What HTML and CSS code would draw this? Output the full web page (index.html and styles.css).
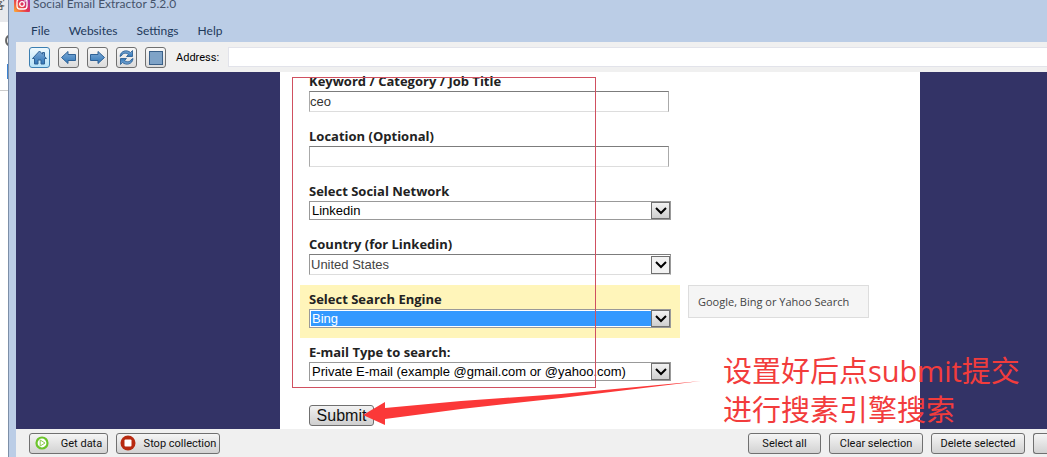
FILE: index.html
```
<!DOCTYPE html>
<html lang="en">
<head>
  <meta charset="UTF-8" />
  <meta name="viewport" content="width=device-width, initial-scale=1.0"/>
  <title>Social Email Extractor 5.2.0</title>
  <link rel="stylesheet" href="styles.css">
</head>
<body>

  <!-- Window behind the app -->
  <div class="behind">
    <div class="behind-tab">客</div>
    <div class="behind-bar">
      <svg width="8" height="68" viewBox="0 0 8 68">
        <path d="M9 13.500a5 5.500 0 0 0 0 10" fill="none" stroke="#666" stroke-width="2"/>
        <rect x="7" y="42" width="1" height="15" fill="#3b82d0"/>
      </svg>
    </div>
  </div>

  <div class="window">
    <header class="title-bar">
      <svg class="logo" width="16" height="16" viewBox="0 0 16 16">
        <defs>
          <linearGradient id="insta" x1="0" y1="1" x2="1" y2="0">
            <stop offset="0" stop-color="#fdb035"/>
            <stop offset="0.45" stop-color="#e5334f"/>
            <stop offset="1" stop-color="#9a35c4"/>
          </linearGradient>
        </defs>
        <rect width="16" height="16" rx="1" fill="url(#insta)"/>
        <rect x="3" y="3" width="10" height="10" rx="3" fill="none" stroke="#fff" stroke-width="1.3"/>
        <circle cx="8" cy="8" r="2.3" fill="none" stroke="#fff" stroke-width="1.3"/>
        <circle cx="11" cy="5" r="0.8" fill="#fff"/>
      </svg>
      <span>Social Email Extractor 5.2.0</span>
    </header>

    <nav class="menu">
      <a href="#">File</a>
      <a href="#">Websites</a>
      <a href="#">Settings</a>
      <a href="#">Help</a>
    </nav>

    <div class="toolbar">
      <button class="tool active" aria-label="Home">
        <svg width="17" height="17" viewBox="0 0 17 17"><path d="M8.500 2L1.500 9.500H3.500V15H7V11H10V15H13.500V9.500H15.500L13.500 7.300V3.500H11.500V5.200Z" fill="url(#blue)" stroke="#2f6296"/></svg>
      </button>
      <button class="tool" aria-label="Back">
        <svg width="17" height="17" viewBox="0 0 17 17"><path d="M1.500 8.500L8 2.500V5.500H15.500V11.500H8V14.500Z" fill="url(#blue)" stroke="#2f6296"/></svg>
      </button>
      <button class="tool" aria-label="Forward">
        <svg width="17" height="17" viewBox="0 0 17 17"><path d="M15.500 8.500L9 2.500V5.500H1.500V11.500H9V14.500Z" fill="url(#blue)" stroke="#2f6296"/></svg>
      </button>
      <button class="tool" aria-label="Refresh">
        <svg width="17" height="17" viewBox="0 0 17 17"><path id="turn" d="M2 7.500C2.500 1.500 9 .5 12.500 3.500L14.500 1.500V7.500H8.500L10.500 5.500C8 3.500 5 4 4 6.200Z" fill="url(#blue)" stroke="#2f6296" stroke-width=".9"/><use href="#turn" transform="rotate(180 8.500 8.500)"/></svg>
      </button>
      <button class="tool" aria-label="Stop">
        <svg width="17" height="17" viewBox="0 0 17 17">
          <defs>
            <linearGradient id="blue" x1="0" y1="0" x2="0" y2="1">
              <stop offset="0" stop-color="#7fabd6"/>
              <stop offset="1" stop-color="#2f76b8"/>
            </linearGradient>
          </defs>
          <rect x="2.500" y="2.500" width="13" height="13" fill="#7fa3c7" stroke="#3a6089"/>
        </svg>
      </button>
      <label for="address">Address:</label>
      <input type="text" id="address" class="address">
    </div>

    <main class="viewport">
      <form class="page">
        <div class="field">
          <label for="keyword">Keyword / Category / Job Title</label>
          <input type="text" id="keyword" value="ceo">
        </div>
        <div class="field">
          <label for="location">Location (Optional)</label>
          <input type="text" id="location">
        </div>
        <div class="field">
          <label for="network">Select Social Network</label>
          <div class="select">
            <select id="network"><option>Linkedin</option></select>
            <span class="drop"><svg width="12" height="8" viewBox="0 0 12 8"><path d="M1 1L6 6L11 1" fill="none" stroke="#000" stroke-width="2"/></svg></span>
          </div>
        </div>
        <div class="field">
          <label for="country">Country (for Linkedin)</label>
          <div class="select country">
            <select id="country"><option>United States</option></select>
            <span class="drop"><svg width="12" height="8" viewBox="0 0 12 8"><path d="M1 1L6 6L11 1" fill="none" stroke="#000" stroke-width="2"/></svg></span>
          </div>
        </div>
        <div class="field current">
          <label for="engine">Select Search Engine</label>
          <div class="select">
            <select id="engine"><option>Bing</option></select>
            <span class="drop"><svg width="12" height="8" viewBox="0 0 12 8"><path d="M1 1L6 6L11 1" fill="none" stroke="#000" stroke-width="2"/></svg></span>
          </div>
          <div class="hint">Google, Bing or Yahoo Search</div>
        </div>
        <div class="field">
          <label for="type">E-mail Type to search:</label>
          <div class="select">
            <select id="type"><option>Private E-mail (example @gmail.com or @yahoo.com)</option></select>
            <span class="drop"><svg width="12" height="8" viewBox="0 0 12 8"><path d="M1 1L6 6L11 1" fill="none" stroke="#000" stroke-width="2"/></svg></span>
          </div>
        </div>
        <button type="submit" class="submit">Submit</button>
      </form>

      <!-- Notes drawn over the page -->
      <div class="note-frame"></div>
      <svg class="note-arrow" width="340" height="46" viewBox="0 0 340 46">
        <path d="M2 35L24 22L24 28L100 21L200 14L340 1L200 18L100 29L24 39L24 45Z" fill="#fb3838"/>
      </svg>
      <p class="note-text" lang="zh">设置好后点submit提交<br>进行搜素引擎搜索</p>
    </main>

    <footer class="actions">
      <button class="get"><svg width="14" height="14" viewBox="0 0 14 14"><circle cx="7" cy="7" r="5.500" fill="#fff" stroke="#6cc42c" stroke-width="2.200"/><path d="M5.200 4L10 7L5.200 10Z" fill="#fff" stroke="#8ccc50"/></svg>Get data</button>
      <button class="stop"><svg width="16" height="16" viewBox="0 0 16 16"><circle cx="8" cy="8" r="7.500" fill="#b82a10"/><rect x="4.500" y="4.500" width="7" height="7" rx="1" fill="#fff"/></svg>Stop collection</button>
      <span class="spacer"></span>
      <button class="select-all">Select all</button>
      <button class="wide">Clear selection</button>
      <button class="wide">Delete selected</button>
      <button class="cut" aria-label="More"></button>
    </footer>
  </div>

</body>
</html>
```
FILE: styles.css
```
* {
  box-sizing: border-box;
}
body {
  margin: 0;
  height: 100vh;
  display: flex;
  overflow: hidden;
  background: #fff;
  font-family: "Open Sans", sans-serif;
  font-size: 12px;
}
button, input, select {
  font-family: inherit;
  margin: 0;
}
.behind {
  flex: 0 0 8px;
  overflow: hidden;
}
.behind-tab {
  height: 22px;
  background: #e8e9ec;
  color: #555;
  font: 12px/8px "Noto Sans CJK SC", sans-serif;
  text-indent: -7px;
}
.behind-bar {
  height: 69px;
  border-bottom: 1px solid #ccc;
}
.window {
  flex: 1;
  min-width: 0;
  display: flex;
  flex-direction: column;
  border-left: 1px solid #7d8fa8;
  padding-left: 7px;
  background: #bbcde6;
}
.title-bar {
  height: 14px;
  display: flex;
  gap: 3px;
  margin-left: -2px;
  color: #45536b;
  font-family: Lato, sans-serif;
  line-height: 8px;
}
.logo {
  margin-top: -4px;
}
.menu {
  height: 28px;
  display: flex;
  align-items: center;
  gap: 19px;
  padding: 4px 15px 0;
  font-family: Lato, sans-serif;
}
.menu a {
  color: #1e395b;
  text-decoration: none;
}
.toolbar {
  height: 30px;
  display: flex;
  align-items: center;
  gap: 8px;
  padding-left: 13px;
  background: #f0f0f0;
  font-family: Roboto, sans-serif;
  font-size: 11px;
}
.tool {
  width: 21px;
  height: 21px;
  padding: 0;
  display: flex;
  align-items: center;
  justify-content: center;
  border: 1px solid #707070;
  border-radius: 3px;
  background: linear-gradient(#f8f8f8, #dcdcdc);
}
.tool.active {
  border-color: #3c7fb1;
  background: linear-gradient(#eef9fe, #b5e2f8);
}
.toolbar label {
  margin: 0 1px 0 2px;
}
.address {
  flex: 1;
  height: 20px;
  border: 1px solid #e2e3ea;
  border-right: 0;
  background: #fff;
}
.viewport {
  flex: 1;
  min-height: 0;
  position: relative;
  display: flex;
  overflow: hidden;
  background: #333366;
}
.page {
  width: 640px;
  height: 400px;
  margin-left: 264px;
  margin-top: -5px;
  padding: 0 20px;
  background: #fff;
}
.field {
  width: 380px;
  padding: 5px 9px 10px;
  position: relative;
}
.field.current {
  background: #fff5ba;
}
.field label {
  display: block;
  color: #222;
  font-size: 13px;
  font-weight: bold;
  line-height: 19px;
}
.field input {
  display: block;
  width: 360px;
  height: 21px;
  padding: 0;
  border: 1px solid #aaa;
  border-top-color: #7c7c7c;
  border-bottom-color: #ddd;
  color: #333;
  font: 13px "Liberation Sans", sans-serif;
}
.select {
  position: relative;
  height: 19px;
}
.select select {
  display: block;
  width: 100%;
  height: 100%;
  padding: 1px 20px 1px 1px;
  appearance: none;
  border: 1px solid #999;
  border-radius: 0;
  background: #fff;
  color: #000;
  font: 13px/15px "Liberation Sans", sans-serif;
  text-indent: 1px;
}
.select.country {
  height: 21px;
}
.country select {
  border-top-color: #7c7c7c;
  border-bottom-color: #ddd;
  color: #444;
  line-height: 17px;
  text-indent: 0;
}
.current select {
  background: #3399ff;
  box-shadow: inset 0 0 0 1px #fff;
  color: #fff;
}
.drop {
  position: absolute;
  top: 1px;
  right: 1px;
  bottom: 1px;
  width: 19px;
  display: flex;
  align-items: center;
  justify-content: center;
  border: 1px solid #707070;
  background: linear-gradient(#f2f2f2, #cfcfcf);
  pointer-events: none;
}
.country .drop {
  top: 2px;
  background: #f2f2f2;
}
.hint {
  position: absolute;
  left: 388px;
  top: 0;
  width: 181px;
  padding: 0 9px;
  border: 1px solid #ddd;
  background: #f5f5f5;
  color: #444;
  font-size: 11px;
  line-height: 31px;
  white-space: nowrap;
}
.submit {
  display: block;
  width: 65px;
  height: 21px;
  margin: 14px 9px 0;
  padding: 0;
  border: 1px solid #707070;
  border-radius: 3px;
  background: linear-gradient(#f2f2f2, #cfcfcf);
  color: #111;
  font: 16px/19px "Liberation Sans", sans-serif;
}
.note-frame {
  position: absolute;
  left: 276px;
  top: 5px;
  width: 304px;
  height: 311px;
  border: 1px solid #d05060;
  pointer-events: none;
}
.note-arrow {
  position: absolute;
  left: 345px;
  top: 308px;
  pointer-events: none;
}
.note-text {
  position: absolute;
  left: 707px;
  top: 279px;
  margin: 0;
  color: #f23c3c;
  font: 29px/39px "Open Sans", "Noto Sans CJK SC", sans-serif;
  white-space: nowrap;
}
.actions {
  height: 28px;
  display: flex;
  align-items: center;
  gap: 8px;
  padding-left: 13px;
  background: #f0f0f0;
}
.actions button {
  flex: none;
  height: 21px;
  padding: 0;
  display: flex;
  align-items: center;
  justify-content: center;
  border: 1px solid #707070;
  border-radius: 3px;
  background: linear-gradient(#f5f5f5, #d2d2d2);
  color: #111;
  font: 11px Roboto, sans-serif;
  white-space: nowrap;
}
.actions .get {
  width: 79px;
  gap: 12px;
}
.actions .stop {
  width: 104px;
  gap: 8px;
}
.spacer {
  flex: 1;
}
.actions .select-all {
  width: 73px;
}
.actions .wide {
  width: 94px;
}
.actions .cut {
  width: 14px;
  border-right: 0;
  border-radius: 3px 0 0 3px;
}
```
